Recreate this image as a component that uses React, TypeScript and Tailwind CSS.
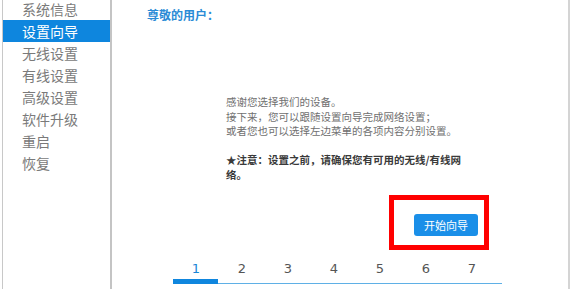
import React from 'react'

const menu = ['系统信息', '设置向导', '无线设置', '有线设置', '高级设置', '软件升级', '重启', '恢复']
const steps = [1, 2, 3, 4, 5, 6, 7]

const cjk = "font-['Microsoft_YaHei','Noto_Sans_CJK_SC',sans-serif]"

export default function App() {
  return (
    <div className={`relative flex h-[289px] w-[574px] overflow-hidden bg-white ${cjk}`}>
      <div className="ml-[2px] flex h-full w-[110px] shrink-0 border-l border-r-2 border-l-[#c8c8c8] border-r-[#c4c4c4]">
        <ul className="-mt-[2px] w-full">
          {menu.map((m, i) => (
            <li
              key={m}
              className={`h-[22px] pl-[19px] text-[14px] leading-[22px] ${
                i === 1 ? 'bg-[#0e86de] text-white' : 'text-[#7a7a7a]'
              }`}
            >
              {m}
            </li>
          ))}
        </ul>
      </div>

      <div className="flex h-full w-[458px] shrink-0 flex-col border-r-2 border-r-[#d4d4d4]">
        <h1 className="mt-[7px] pl-[35px] text-[12px] font-bold leading-[16px] text-[#2a8bd6]">尊敬的用户：</h1>

        <div className="ml-[114px] mt-[72px] w-[246px] text-[10.5px] leading-[14.5px] text-[#707070]">
          <p>感谢您选择我们的设备。</p>
          <p>接下来，您可以跟随设置向导完成网络设置；</p>
          <p>或者您也可以选择左边菜单的各项内容分别设置。</p>
          <p className="mt-[14.5px] font-bold text-[#3a3a3a]">★注意：设置之前，请确保您有可用的无线/有线网络。</p>
        </div>

        <div className="mt-[32px] flex pl-[302px]">
          <button className="h-[22px] w-[64px] rounded-[3px] bg-[#1a8fe8] text-[11px] text-white">开始向导</button>
        </div>

        <div className="ml-[61px] mt-[24px] w-[329px]">
          <div className="flex">
            {steps.map((s) => (
              <div
                key={s}
                className={`w-[46px] text-center font-['Verdana','DejaVu_Sans',sans-serif] text-[13px] leading-[18px] ${
                  s === 1 ? 'text-[#1a86d6]' : 'text-[#555]'
                }`}
              >
                {s}
              </div>
            ))}
          </div>
          <div className="mt-[1px] flex items-end">
            <div className="h-[5px] w-[45px] bg-[#0f86de]" />
            <div className="h-px flex-1 bg-[#5fb0e6]" />
          </div>
        </div>
      </div>

      <div className="absolute left-[389px] top-[195px] h-[55px] w-[100px] border-[5px] border-[#ff0000]" />
    </div>
  )
}
